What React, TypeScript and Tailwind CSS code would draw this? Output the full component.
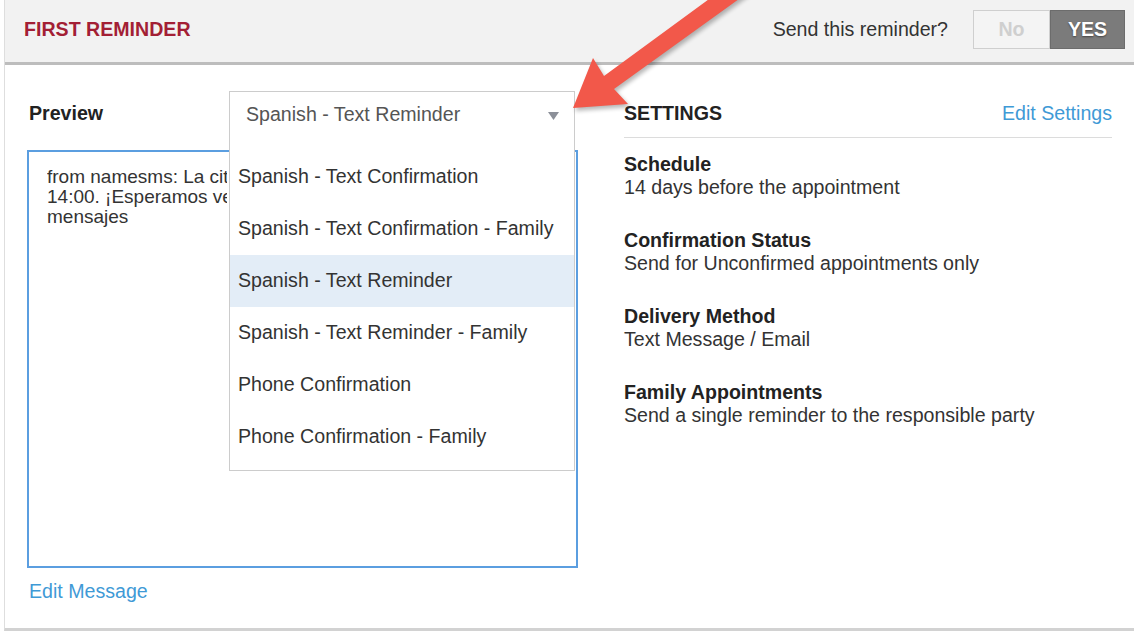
import React from "react";

const templates = [
  "Spanish - Text Confirmation",
  "Spanish - Text Confirmation - Family",
  "Spanish - Text Reminder",
  "Spanish - Text Reminder - Family",
  "Phone Confirmation",
  "Phone Confirmation - Family",
];

const settings = [
  { title: "Schedule", value: "14 days before the appointment" },
  { title: "Confirmation Status", value: "Send for Unconfirmed appointments only" },
  { title: "Delivery Method", value: "Text Message / Email" },
  { title: "Family Appointments", value: "Send a single reminder to the responsible party" },
];

const selected = "Spanish - Text Reminder";

/** Red callout arrow pointing at the template dropdown. */
function CalloutArrow() {
  const pts = "573,108 593,58 604,76 746,-28 757,-14 614,89 628,104";
  return (
    <svg className="pointer-events-none absolute left-0 top-0" width="1134" height="632" viewBox="0 0 1134 632">
      <defs>
        <filter id="arrow-shadow" x="-20%" y="-20%" width="140%" height="140%">
          <feGaussianBlur stdDeviation="2" />
        </filter>
      </defs>
      <polygon points={pts} fill="#000" opacity="0.28" transform="translate(2 3)" filter="url(#arrow-shadow)" />
      <polygon points={pts} fill="#f2584a" />
    </svg>
  );
}

function TemplateSelect() {
  return (
    <div className="relative w-[346px]">
      <div className="flex h-[46px] items-center justify-between border border-b-0 border-[#cccccc] bg-white pl-[16px] pr-[15px] text-[#555555]">
        <span>{selected}</span>
        <svg width="11" height="8" viewBox="0 0 11 8" className="mt-[2px]">
          <polygon points="0,0 11,0 5.5,8" fill="#8c9099" />
        </svg>
      </div>
      {/* open list, lies over the preview box */}
      <ul className="absolute left-0 top-full z-10 w-full border border-t-0 border-[#cccccc] bg-white pb-[7px] pt-[14px]">
        {templates.map((t) => (
          <li
            key={t}
            className={`flex h-[52px] items-center pl-[8px] text-[#333333] ${t === selected ? "bg-[#e3edf7]" : ""}`}
          >
            {t}
          </li>
        ))}
      </ul>
    </div>
  );
}

export default function App() {
  return (
    <div className="relative h-[632px] w-[1134px] overflow-hidden bg-white pl-[4px] font-['Liberation_Sans',Arial,sans-serif] text-[19.6px] text-[#333333]">
      <div className="flex h-[631px] flex-col border-b-[3px] border-l border-[#d2d2d2] border-l-[#dedede]">
        <header className="flex h-[65px] shrink-0 items-center justify-between border-b-[3px] border-[#bdbdbd] bg-[#f2f2f2] pb-[3px] pl-[19px] pr-[9px]">
          <h2 className="text-[19.6px] font-semibold text-[#a31f35]">FIRST REMINDER</h2>
          <div className="flex items-center gap-[25px]">
            <span className="text-[#333333]">Send this reminder?</span>
            <div className="flex h-[39px]">
              <button className="w-[77px] border border-[#cfcfcf] bg-[#f4f4f4] font-bold text-[#cfcfcf]">No</button>
              <button className="w-[75px] border border-[#6c6c6c] bg-[#7b7b7b] font-bold text-white [text-shadow:0_1px_2px_rgba(0,0,0,0.45)]">
                YES
              </button>
            </div>
          </div>
        </header>

        <div className="flex flex-1 gap-[46px] pl-[22px] pr-[22px]">
          <section className="w-[551px] shrink-0">
            <div className="mt-[26px] flex h-[46px] items-center">
              <span className="w-[202px] pl-[2px] font-bold text-[#222222]">Preview</span>
              <TemplateSelect />
            </div>
            <div className="mt-[13px] h-[418px] border-2 border-[#5b9ee0] pl-[18px] pt-[15px] text-[19px] leading-[20px] text-[#333333]">
              {/* the rest of the message sits under the open dropdown */}
              <div className="w-[180px] overflow-hidden whitespace-nowrap">
                <div>from namesms: La cita de Ana es el 15/03 a las</div>
                <div>14:00. ¡Esperamos verle! Envíe STOP para no recibir</div>
                <div>mensajes</div>
              </div>
            </div>
            <a className="mt-[12px] block pl-[2px] leading-[23px] text-[#3f9ad6]" href="#">
              Edit Message
            </a>
          </section>

          <section className="flex-1">
            <div className="mt-[26px] flex h-[47px] items-center justify-between border-b border-[#dcdcdc] pb-[1px]">
              <span className="font-bold text-[#222222]">SETTINGS</span>
              <a className="text-[#3f9ad6]" href="#">
                Edit Settings
              </a>
            </div>
            <dl className="mt-[15px] flex flex-col gap-[30px] leading-[23px]">
              {settings.map((s) => (
                <div key={s.title}>
                  <dt className="font-bold text-[#222222]">{s.title}</dt>
                  <dd>{s.value}</dd>
                </div>
              ))}
            </dl>
          </section>
        </div>
      </div>
      <CalloutArrow />
    </div>
  );
}
